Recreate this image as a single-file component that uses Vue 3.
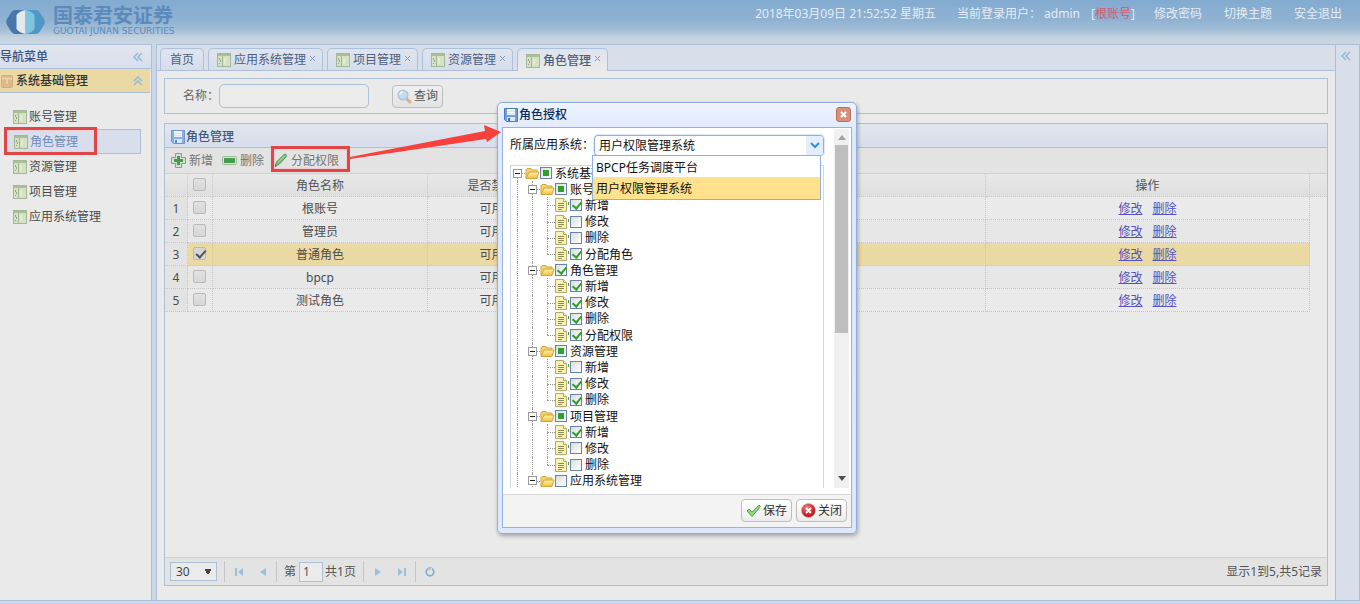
<script setup>
import { ref } from 'vue'

const menu = ['账号管理', '角色管理', '资源管理', '项目管理', '应用系统管理']
const activeMenu = ref('角色管理')

const tabs = ['首页', '应用系统管理', '项目管理', '资源管理', '角色管理']
const activeTab = ref('角色管理')

const rows = ref([
  { name: '根账号', state: '可用', checked: false },
  { name: '管理员', state: '可用', checked: false },
  { name: '普通角色', state: '可用', checked: true },
  { name: 'bpcp', state: '可用', checked: false },
  { name: '测试角色', state: '可用', checked: false }
])

const systems = ['BPCP任务调度平台', '用户权限管理系统']
const system = ref('用户权限管理系统')
const keyword = ref('')
const page = ref('1')

const groups = [
  ['账号管理', 'part', [['新增', 1], ['修改', 0], ['删除', 0], ['分配角色', 1]]],
  ['角色管理', 'on', [['新增', 1], ['修改', 1], ['删除', 1], ['分配权限', 1]]],
  ['资源管理', 'part', [['新增', 0], ['修改', 1], ['删除', 1]]],
  ['项目管理', 'part', [['新增', 1], ['修改', 0], ['删除', 0]]],
  ['应用系统管理', 'off', []]
]

// guides: line style of each indent cell, from the left
const nodes = [{ level: 0, text: '系统基础管理', state: 'part', guides: [] }]
for (const [text, state, children] of groups) {
  nodes.push({ level: 1, text, state, guides: ['v'] })
  children.forEach(([label, on], i) => {
    const last = i === children.length - 1
    nodes.push({ level: 2, text: label, state: on ? 'on' : 'off', guides: ['v', 'v', last ? 'half h' : 'v h'] })
  })
}
</script>

<template>
  <div class="page">
    <svg class="defs" aria-hidden="true">
      <defs>
        <linearGradient id="gFolder" x1="0" y1="0" x2="0" y2="1">
          <stop offset="0" stop-color="#fff2a8" />
          <stop offset="1" stop-color="#f0c040" />
        </linearGradient>
        <radialGradient id="gClose" cx=".4" cy=".3" r=".8">
          <stop offset="0" stop-color="#f28080" />
          <stop offset=".6" stop-color="#d02228" />
          <stop offset="1" stop-color="#a81218" />
        </radialGradient>
        <symbol id="iGrid" viewBox="0 0 14 14">
          <rect x=".5" y=".5" width="13" height="13" fill="#d6e0c2" stroke="#a3b897" />
          <rect x="1" y="1" width="12" height="2" fill="#a9bf98" />
          <path d="M5.5 3v10" stroke="#a3b897" />
          <path d="M2.5 5v2M3.500 7v2M2.500 10v1" stroke="#93a986" />
          <path d="M8 5v6" stroke="#e4ebd4" stroke-width="2" />
        </symbol>
        <symbol id="iDisk" viewBox="0 0 14 14">
          <path d="M.5.5h13v13h-11l-2-2z" fill="#6f9fe0" stroke="#4a7dc6" />
          <rect x="3" y="1" width="8" height="6" fill="#f5faff" />
          <path d="M3 3.500h8M3 5.500h8" stroke="#d3e2f5" />
          <rect x="3" y="9" width="8" height="4" fill="#dbe7f5" />
          <rect x="4" y="10" width="2" height="3" fill="#3b6fba" />
        </symbol>
      </defs>
    </svg>

    <header class="top">
      <svg class="logo" viewBox="0 0 39 26" aria-hidden="true">
        <path d="M19.500 1H9Q7 1 5.500 3L1 10q-1.500 3 0 6l4.500 7q1.500 2 3.500 2h10.500z" fill="#4777ab" />
        <path d="M19.500 1H30q2 0 3.500 2L38 10q1.500 3 0 6l-4.500 7q-1.500 2-3.500 2H19.500z" fill="#4f97c6" />
        <path d="M19.500 1v24q-6-1-9-5V6q3-4 9-5z" fill="#e6e9ec" />
        <path d="M19.500 1v24q6-1 9-5V6q-3-4-9-5z" fill="#7fc5e0" />
      </svg>
      <div class="brand">
        <strong>国泰君安证券</strong>
        <small>GUOTAI JUNAN SECURITIES</small>
      </div>
      <div class="user">
        <span>2018年03月09日 21:52:52 星期五</span>
        <span>当前登录用户： admin <span class="account">[<em>根账号</em>]</span></span>
      </div>
      <nav class="links">
        <a href="#">修改密码</a><a href="#">切换主题</a><a href="#">安全退出</a>
      </nav>
    </header>

    <div class="body">
      <aside class="west">
        <div class="west-title">
          <span>导航菜单</span>
          <svg viewBox="0 0 10 10" class="chev"><path d="M5 1L1 5l4 4M9 1L5 5l4 4" /></svg>
        </div>
        <div class="accordion">
          <svg class="box" viewBox="0 0 12 13"><rect x=".5" y=".5" width="11" height="12" rx="1" fill="#dcb88c" stroke="#d6ad7e" /><path d="M1 3.500h10M6 3.500V9" stroke="#e9cfa6" stroke-width="2" /></svg>
          <span>系统基础管理</span>
          <svg viewBox="0 0 10 10" class="chev"><path d="M1 5l4-4 4 4M1 9l4-4 4 4" /></svg>
        </div>
        <ul class="menu">
          <li v-for="m in menu" :key="m">
            <a href="#" :class="{ active: m === activeMenu }" @click.prevent="activeMenu = m">
              <svg class="ico"><use href="#iGrid" /></svg>{{ m }}
            </a>
          </li>
        </ul>
      </aside>

      <main class="center">
        <div class="tabs" role="tablist">
          <div v-for="t in tabs" :key="t" class="tab" :class="{ active: t === activeTab }">
            <button role="tab" class="tab-main" :aria-selected="t === activeTab" @click="activeTab = t">
              <svg v-if="t !== '首页'" class="ico"><use href="#iGrid" /></svg>{{ t }}
            </button>
            <button v-if="t !== '首页'" class="tab-close" aria-label="关闭">
              <svg viewBox="0 0 5 5"><path d="M0 0l5 5M5 0L0 5" /></svg>
            </button>
          </div>
        </div>

        <div class="content">
          <form class="search" @submit.prevent>
            <label for="kw">名称：</label>
            <input id="kw" v-model="keyword" type="text" />
            <button class="btn" type="submit">
              <svg viewBox="0 0 15 15" class="ico15">
                <path d="M9 9l4 4" stroke="#dbb27c" stroke-width="3" stroke-linecap="round" />
                <circle cx="6" cy="6" r="4.800" fill="#c2dcf0" stroke="#a9c4dc" stroke-width="1.500" />
                <path d="M3 6q0-3 3-3" stroke="#eef6fc" fill="none" stroke-width="1.400" />
              </svg>查询
            </button>
          </form>

          <section class="panel">
            <h2><svg class="ico faded"><use href="#iDisk" /></svg>角色管理</h2>
            <div class="toolbar">
              <button>
                <svg viewBox="0 0 15 15" class="ico15"><path d="M4.500.5h6v4h4v6h-4v4h-6v-4h-4v-6h4z" fill="#d3e0d0" stroke="#7fa580" /><path d="M6 3h3v3h3v3H9v3H6V9H3V6h3z" fill="#459c4a" /></svg>新增
              </button>
              <button>
                <svg viewBox="0 0 15 15" class="ico15"><rect x=".5" y="3.500" width="14" height="8" rx="1" fill="#d9e4d6" stroke="#9db99c" /><rect x="2" y="5" width="11" height="5" fill="#459c4a" /></svg>删除
              </button>
              <button>
                <svg viewBox="0 0 15 15" class="ico15"><path d="M2 13l1.500-4L11 1.500q1-.8 2 0t0 2.500L6 11.500z" fill="#7cbc76" stroke="#55985a" /><path d="M5 9.500L12 2.500" stroke="#b7dcae" /><path d="M1 14.500l1-3 2 1.500z" fill="#4a6a48" /></svg>分配权限
              </button>
            </div>

            <table>
              <colgroup>
                <col class="c-num" /><col class="c-check" /><col class="c-name" /><col class="c-state" />
                <col /><col class="c-op" /><col class="c-fill" />
              </colgroup>
              <thead>
                <tr>
                  <th></th>
                  <th class="ck"><input type="checkbox" class="check" aria-label="全选" /></th>
                  <th>角色名称</th>
                  <th>是否禁用</th>
                  <th></th>
                  <th>操作</th>
                  <th class="fill"></th>
                </tr>
              </thead>
              <tbody>
                <tr v-for="(r, i) in rows" :key="r.name" :class="{ sel: r.checked }">
                  <td class="num">{{ i + 1 }}</td>
                  <td class="ck"><input v-model="r.checked" type="checkbox" class="check" :aria-label="r.name" /></td>
                  <td>{{ r.name }}</td>
                  <td>{{ r.state }}</td>
                  <td></td>
                  <td class="ops"><a href="#">修改</a><a href="#">删除</a></td>
                  <td class="fill"></td>
                </tr>
              </tbody>
            </table>

            <footer class="pager">
              <select aria-label="每页条数"><option>30</option></select>
              <i></i>
              <button aria-label="首页"><svg viewBox="0 0 10 10"><path d="M1 1h2v8H1zM9 1v8L4 5z" /></svg></button>
              <button aria-label="上一页"><svg viewBox="0 0 10 10"><path d="M8 1v8L2 5z" /></svg></button>
              <i></i>
              <label for="pg">第</label>
              <input id="pg" v-model="page" type="text" />
              <span class="total">共1页</span>
              <i></i>
              <button aria-label="下一页"><svg viewBox="0 0 10 10"><path d="M2 1v8l6-4z" /></svg></button>
              <button aria-label="末页"><svg viewBox="0 0 10 10"><path d="M7 1h2v8H7zM1 1v8l5-4z" /></svg></button>
              <i></i>
              <button aria-label="刷新"><svg viewBox="0 0 10 10"><path d="M3 1.800A3.800 3.800 0 1 0 7 1.800" class="ring" /><path d="M3 0h4L4 4z" /></svg></button>
              <span class="info">显示1到5,共5记录</span>
            </footer>
          </section>
        </div>
      </main>

      <aside class="east">
        <svg viewBox="0 0 10 10" class="chev"><path d="M5 1L1 5l4 4M9 1L5 5l4 4" /></svg>
      </aside>
    </div>

    <section class="dialog" role="dialog" aria-labelledby="dlg">
      <div class="dlg-head">
        <svg class="ico"><use href="#iDisk" /></svg>
        <h2 id="dlg">角色授权</h2>
        <button class="x" aria-label="关闭窗口"><svg viewBox="0 0 7 7"><path d="M1 1l5 5M6 1L1 6" /></svg></button>
      </div>
      <div class="dlg-body">
        <div class="dlg-main">
          <div class="field">
            <label for="sys">所属应用系统：</label>
            <div class="combo">
              <input id="sys" v-model="system" type="text" role="combobox" aria-expanded="true" readonly />
              <button aria-label="展开"><svg viewBox="0 0 10 7"><path d="M1 1l4 4 4-4" /></svg></button>
              <ul role="listbox">
                <li v-for="s in systems" :key="s" role="option" :aria-selected="s === system" :class="{ on: s === system }" @click="system = s">{{ s }}</li>
              </ul>
            </div>
          </div>
          <ul class="tree">
            <li v-for="(n, i) in nodes" :key="i">
              <span v-for="(g, k) in n.guides" :key="k" class="cell" :class="g"></span>
              <span v-if="n.level < 2" class="cell h" :class="n.level === 1 ? 'v' : 'below'">
                <svg class="exp" viewBox="0 0 9 9"><rect x=".5" y=".5" width="8" height="8" fill="#fff" stroke="#9b9b9b" /><path d="M2 4.500h5" stroke="#222" /></svg>
              </span>
              <svg v-if="n.level < 2" class="node" viewBox="0 0 15 14">
                <path d="M1 12V3.500l1-1h4l1 1.500h5v2" fill="#f4d36a" stroke="#d0a63c" />
                <path d="M1 12.500L4 6h10l-2 6.500z" fill="url(#gFolder)" stroke="#d0a63c" />
              </svg>
              <svg v-else class="node" viewBox="0 0 15 14">
                <path d="M.5.5h8l3 3v10H.5z" fill="#f8f2b4" stroke="#b3aa6c" />
                <path d="M8.500.5v3h3" fill="#fffbe0" stroke="#b3aa6c" />
                <path d="M3 5.500h6M3 7.500h6M3 9.500h6M3 11.500h4" stroke="#8f8a54" />
                <path d="M13.500 4v3" stroke="#4ba04b" />
              </svg>
              <label>
                <input type="checkbox" :checked="n.state === 'on'" :class="n.state" />
                <span>{{ n.text }}</span>
              </label>
            </li>
          </ul>
        </div>
        <div class="scroll">
          <svg viewBox="0 0 8 5"><path d="M4 0l4 5H0z" fill="#a3a3a3" /></svg>
          <span class="thumb"></span>
          <svg viewBox="0 0 8 5"><path d="M0 0h8L4 5z" fill="#505050" /></svg>
        </div>
      </div>
      <div class="dlg-foot">
        <button class="btn">
          <svg viewBox="0 0 15 15" class="ico15"><path d="M1 8l2-2 3 3 7-7 1.500 1.500L6 13.500z" fill="#8fd87a" stroke="#4fa848" /></svg>保存
        </button>
        <button class="btn">
          <svg viewBox="0 0 15 15" class="ico15"><circle cx="7.500" cy="7.500" r="7" fill="url(#gClose)" stroke="#b5b5b5" stroke-width=".6" /><path d="M5 5l5 5M10 5l-5 5" stroke="#fff" stroke-width="2" /></svg>关闭
        </button>
      </div>
    </section>

    <div class="mark mark-menu"></div>
    <div class="mark mark-grant"></div>
    <svg class="arrow" viewBox="0 0 152 36" aria-hidden="true">
      <path d="M0 32L135 6 134 0 151 7 137 17 136 14 0 34z" fill="#f8403c" />
    </svg>
  </div>
</template>

<style>
html, body { background: #cbd7e7; }
</style>

<style scoped>
* { box-sizing: border-box; }
.page {
  position: relative;
  display: flex;
  flex-direction: column;
  min-height: 100vh;
  padding-bottom: 3px;
  overflow: hidden;
  font: 12px/16px "Noto Sans", "Noto Sans CJK SC", sans-serif;
  color: #4c4c4c;
  background: #cbd7e7;
}
button, input, select { font: inherit; color: inherit; margin: 0; padding: 0; }
button { background: none; border: 0; display: inline-flex; align-items: center; }
ul { list-style: none; margin: 0; padding: 0; }
h2 { margin: 0; font-size: 12px; line-height: 16px; font-weight: 500; }
svg { display: block; flex: none; }
.defs { position: absolute; width: 0; height: 0; }
.ico { width: 14px; height: 14px; }
.ico15 { width: 15px; height: 15px; }
.chev { width: 10px; height: 10px; fill: none; stroke: #91bedd; stroke-width: 1.6; }

.top {
  display: flex;
  height: 44px;
  padding: 0 18px 0 6px;
  background: linear-gradient(#83abd0 0, #8fb2d2 20px, #a3bed8 30px, #c5d3e0 38px, #cad6e1 44px);
  color: #e4ecf3;
}
.logo { width: 39px; height: 26px; margin-top: 9px; }
.brand { display: flex; flex-direction: column; gap: 2px; margin: 5px auto 0 8px; color: #5c8bbb; }
.brand strong { font-family: "Noto Sans CJK SC", sans-serif; font-size: 20px; line-height: 20px; font-weight: 700; }
.brand small { font: 9px/9px "DejaVu Sans", sans-serif; white-space: nowrap; }
.user, .links { display: flex; gap: 21px; padding-top: 6px; white-space: nowrap; }
.account { margin-left: 8px; }
.account em { font-style: normal; color: #d05c6a; }
.links { margin-left: 19px; gap: 22px; }
.links a { color: inherit; text-decoration: none; }

.body { flex: 1; display: flex; border-bottom: 1px solid #adc0da; min-height: 0; }
.west { width: 152px; flex: none; border: 1px solid #adc0da; border-width: 1px 1px 0 0; background: #eaeaea; }
.west-title, .accordion { display: flex; justify-content: space-between; align-items: center; height: 24px; border-bottom: 1px solid #adc0da; }
.west-title { padding-right: 8px; background: linear-gradient(#e1e6ee, #d8dfec); color: #3b5580; font-weight: 500; }
.accordion { width: 150px; padding: 1px 7px 0 1px; background: #ebd9a3; color: #333; font-weight: 500; }
.accordion .box { width: 12px; height: 13px; }
.accordion span { margin: 0 auto 0 3px; }
.menu { padding: 11px 10px 0 5px; }
.menu a { display: flex; align-items: center; gap: 2px; height: 25px; padding-left: 8px; color: #4a4a4a; text-decoration: none; }
.menu a.active { background: #d8deeb; box-shadow: inset 0 0 0 1px #adc0da; color: #6d8bb8; padding-left: 9px; }

.center { flex: 1; min-width: 0; display: flex; flex-direction: column; margin-left: 4px; border: 1px solid #adc0da; border-bottom: 0; background: #eaeaea; }
.tabs { display: flex; gap: 4px; height: 26px; padding: 3px 4px 0 3px; background: #d8deea; border-bottom: 1px solid #adc0da; }
.tab { display: flex; height: 22px; border: 1px solid #adc0da; border-bottom: 0; border-radius: 5px 5px 0 0; background: linear-gradient(#dfe4ee, #d6ddeb); color: #4d607f; }
.tab:first-child { padding: 0 5px; }
.tab.active { height: 23px; background: linear-gradient(#dde3ee, #eaeaea); font-weight: 500; }
.tab-main { gap: 3px; padding: 1px 4px 0 4px; }
.tab:not(:first-child) .tab-main { padding: 1px 4px 0 8px; }
.tab-close { align-items: flex-start; padding: 7px 7px 0 0; }
.tab-close svg { width: 5px; height: 5px; stroke: #8298b8; }
.content { flex: 1; display: flex; flex-direction: column; gap: 9px; padding: 7px 7px 14px; }
.search { display: flex; align-items: center; height: 36px; padding: 0 18px; border: 1px solid #adc0da; }
.search label { color: #666; }
.search input { width: 150px; height: 24px; border: 1px solid #adc0da; border-radius: 5px; background: #ebebeb; padding: 0 5px; }
.btn { gap: 2px; height: 23px; padding: 0 4px; border: 1px solid #bdbdbd; border-radius: 4px; background: linear-gradient(#f0f0f0, #e2e2e2); color: #555; white-space: nowrap; }
.search .btn { margin-left: 23px; }

.panel { flex: 1; display: flex; flex-direction: column; border: 1px solid #adc0da; }
.panel h2 { display: flex; align-items: center; gap: 1px; height: 24px; padding: 2px 6px 0; background: linear-gradient(#e1e5ed, #d7deec); border-bottom: 1px solid #adc0da; color: #3f5880; }
.faded { opacity: .75; }
.toolbar { display: flex; gap: 9px; height: 26px; padding: 0 6px; background: #e3e3e3; border-bottom: 1px solid #d0d0d0; color: #757575; }
.toolbar button { gap: 3px; }
table { width: 100%; table-layout: fixed; border-spacing: 0; border-collapse: separate; text-align: center; }
.c-num { width: 23px; }
.c-check { width: 25px; }
.c-name { width: 215px; }
.c-state { width: 128px; }
.c-op { width: 324px; }
.c-fill { width: 17px; }
th, td { height: 23px; padding: 2px 0 0; border: 1px dotted #c6c6c6; border-width: 0 1px 1px 0; font-weight: 400; }
th { background: linear-gradient(#e8e8e8, #dfdfdf); color: #555; }
tbody tr:nth-child(even) { background: #e7e7e7; }
tbody tr.sel { background: #ebd9a3; }
td.num { background: #e3e3e3; }
.fill { border-right: 0; }
td.fill { background: #eaeaea; border: 0; }
.ck { line-height: 0; padding: 0 1px 2px 0; }
.check { appearance: none; width: 13px; height: 13px; border: 1px solid #b9b9b9; border-radius: 2px; background: linear-gradient(#e2e2e2, #d6d6d6); vertical-align: middle; }
.check:checked { background: #d6d6d6; position: relative; }
.check:checked::after { content: ""; position: absolute; left: 4px; top: 0; width: 4px; height: 8px; border: solid #555; border-width: 0 2px 2px 0; rotate: 42deg; }
.ops a { color: #5552c0; margin: 0 5px; }
.pager { display: flex; align-items: center; height: 28px; margin-top: auto; padding: 0 5px; border-top: 1px solid #cfcfcf; background: #e3e3e3; color: #555; }
.pager select { width: 47px; height: 19px; padding: 0 5px; border: 1px solid #adc0da; border-radius: 0; appearance: none; background: conic-gradient(from -32deg at 50% 100%, #444 64deg, transparent 0) no-repeat 33px 6px / 8px 6px, #ebebeb; color: #444; }
.pager i { width: 1px; height: 21px; background: #c6c6c6; margin: 0 7px; }
.pager button { width: 24px; height: 20px; justify-content: center; }
.pager button svg { width: 10px; height: 10px; fill: #9dc0d9; }
.pager i + button { margin-left: -5px; }
.pager button + i { margin-left: 1px; }
.pager .ring { fill: none; stroke: #7fb0d2; stroke-width: 1.6; }
.pager input { width: 24px; height: 20px; margin: 0 2px 0 3px; padding: 0 3px; border: 1px solid #adc0da; background: #ebebeb; }
.info { margin-left: auto; }

.east { width: 24px; flex: none; padding: 6px 0 0 5px; border: 1px solid #adc0da; border-width: 1px 1px 0 0; background: #d8deea; }

.dialog {
  position: absolute;
  left: 497px;
  top: 102px;
  width: 360px;
  padding: 0 4px 5px;
  border: 1px solid #8fb0dd;
  border-radius: 5px;
  background: linear-gradient(#edf3ff, #dfe9fc 30px, #dde8fb);
  box-shadow: 1px 2px 4px rgba(0, 0, 0, .3);
  color: #111;
}
.dlg-head { display: flex; align-items: center; gap: 1px; height: 24px; padding: 0 1px 1px 2px; color: #0e2d5f; }
.x { justify-content: center; width: 15px; height: 15px; margin-left: auto; border: 1px solid #b9705a; border-radius: 3px; background: #d98f78; }
.x svg { width: 7px; height: 7px; stroke: #fff; stroke-width: 2; }
.dlg-body { display: flex; height: 367px; padding: 0 2px 6px 7px; border: 1px solid #95b3de; border-bottom: 0; background: #fff; }
.dlg-main { flex: 1; min-width: 0; overflow: hidden; padding-right: 10px; }
.field { display: flex; align-items: center; height: 37px; }
.field label { margin-top: -4px; }
.combo { position: relative; flex: 1; display: flex; height: 21px; margin-top: -2px; border: 1px solid #8fb0dd; border-radius: 4px; background: #fff; box-shadow: 0 0 1px 1px #dbe8fa; }
.combo input { flex: 1; min-width: 0; border: 0; padding-left: 4px; background: none; outline: 0; }
.combo button { justify-content: center; width: 17px; background: #e3edfc; border-radius: 0 3px 3px 0; }
.combo button svg { width: 10px; height: 7px; fill: none; stroke: #3290de; stroke-width: 2; }
.combo ul { position: absolute; z-index: 2; left: -3px; right: 2px; top: 19px; border: 1px solid #8fb0dd; background: #fff; }
.combo li { height: 21px; padding: 4px 3px 0; line-height: 16px; }
.combo li.on { height: 22px; background: #ffe28b; }
.tree { display: grid; grid-template-rows: repeat(20, 1fr); height: 324px; box-shadow: inset 0 0 0 1px #cbd9ec; }
.tree li { display: flex; min-height: 0; align-items: center; }
.cell { position: relative; width: 15px; align-self: stretch; display: flex; align-items: center; justify-content: center; }
.cell.v::before, .cell.half::before, .cell.below::before { content: ""; position: absolute; left: 7px; top: 0; bottom: 0; border-left: 1px dotted #9a9a9a; }
.cell.half::before { bottom: 50%; }
.cell.below::before { top: 50%; }
.cell.h::after { content: ""; position: absolute; left: 7px; right: 0; top: 8px; border-top: 1px dotted #9a9a9a; }
.exp { position: relative; z-index: 1; width: 9px; height: 9px; }
.node { width: 15px; height: 14px; }
.tree label { display: flex; align-items: center; height: 16px; gap: 3px; white-space: nowrap; }
.tree label span { padding-top: 1px; }
.tree input { appearance: none; width: 12px; height: 12px; border: 1px solid #6685a6; background: linear-gradient(135deg, #dcdcdc, #fff); position: relative; }
.tree input.part::after { content: ""; position: absolute; inset: 2px; background: #2da12d; }
.tree input:checked::after { content: ""; position: absolute; left: 3px; top: 0; width: 4px; height: 7px; border: solid #2da12d; border-width: 0 2px 2px 0; rotate: 40deg; }
.scroll { display: flex; flex-direction: column; align-items: center; width: 15px; margin-top: 1px; padding: 6px 1px 7px; background: #f0f0f0; }
.scroll svg { width: 8px; height: 5px; }
.thumb { width: 100%; height: 188px; margin: 5px 0 auto; background: #bebebe; }
.dlg-foot { display: flex; justify-content: flex-end; gap: 4px; height: 34px; padding: 4px 4px; border: 1px solid #95b3de; border-top-color: #d6d6d6; background: #f3f3f3; }
.dlg-foot .btn { background: linear-gradient(#fff, #ebebeb); color: #333; }

.mark { position: absolute; border: 3px solid #e04547; box-shadow: inset 0 0 1px 1px #f2cccc; }
.mark-menu { left: 4px; top: 127px; width: 93px; height: 28px; }
.mark-grant { left: 271px; top: 146px; width: 79px; height: 26px; }
.arrow { position: absolute; left: 350px; top: 125px; width: 152px; height: 36px; }
</style>
